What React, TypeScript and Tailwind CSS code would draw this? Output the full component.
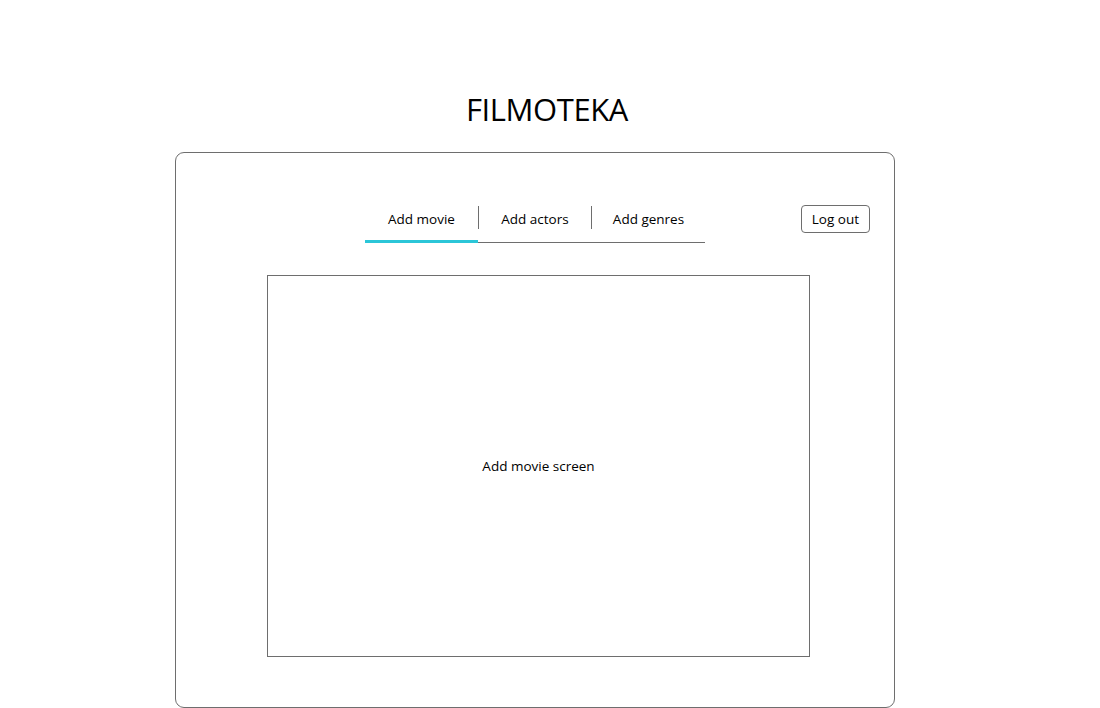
import React from 'react'

function App() {
  return (
    <div className="min-h-[708px] bg-white text-black" style={{ fontFamily: '"Open Sans", "Noto Sans", sans-serif' }}>
      <h1 className="pt-[87px] pr-[6px] text-center text-[31px] leading-[44px] font-normal tracking-[-0.4px]">FILMOTEKA</h1>
      <div className="ml-[175px] mt-[21px] w-[720px] rounded-[9px] border border-[#6e6e6e] pt-[44px] pb-[50px]">
        <div className="grid grid-cols-[1fr_auto_1fr] items-center">
          <div />
          <nav className="flex border-b border-[#6e6e6e]">
            <div className="relative flex h-[45px] w-[113px] items-center justify-center text-[13.5px]">
              Add movie
              <span className="absolute -bottom-px left-0 right-0 h-[3px] bg-[#2bc6d8]" />
            </div>
            <div className="flex h-[45px] w-[113px] items-center justify-center border-l border-[#6e6e6e] text-[13.5px] [border-image:linear-gradient(to_bottom,transparent_10px,#6e6e6e_10px,#6e6e6e_32px,transparent_32px)_1]">
              Add actors
            </div>
            <div className="flex h-[45px] w-[114px] items-center justify-center border-l border-[#6e6e6e] text-[13.5px] [border-image:linear-gradient(to_bottom,transparent_10px,#6e6e6e_10px,#6e6e6e_32px,transparent_32px)_1]">
              Add genres
            </div>
          </nav>
          <div className="flex justify-end pr-[24px] pb-[2px]">
            <button className="h-[28px] rounded-[4px] border border-[#6e6e6e] px-[10px] pt-[2px] text-[13.5px] leading-none">Log out</button>
          </div>
        </div>
        <div className="ml-[91px] mt-[32px] flex h-[382px] w-[543px] items-center justify-center border border-[#6e6e6e] text-[13.5px]">
          Add movie screen
        </div>
      </div>
    </div>
  )
}

export default App
